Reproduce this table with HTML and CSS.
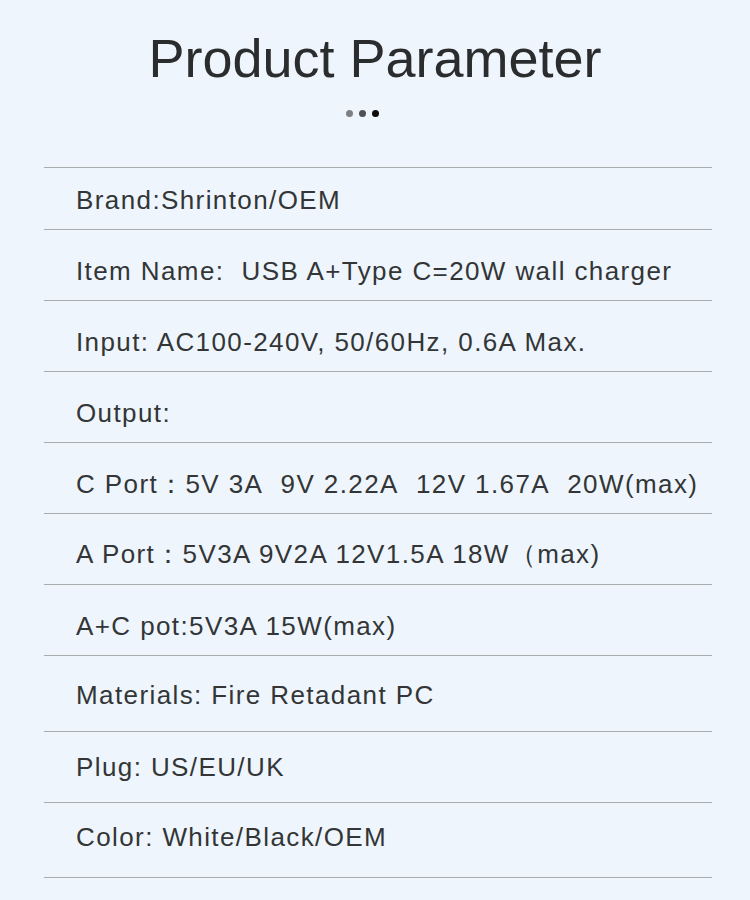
FILE: index.html
```html
<!DOCTYPE html>
<html lang="en">
<head>
<meta charset="utf-8">
<title>Product Parameter</title>
<link rel="stylesheet" href="styles.css">
</head>
<body>
<main class="page">
  <h1 class="title">Product Parameter</h1>
  <div class="dots">
    <span class="dot dot-light"></span>
    <span class="dot dot-mid"></span>
    <span class="dot dot-dark"></span>
  </div>
  <ul class="params">
    <li class="row row-brand">Brand:Shrinton/OEM</li>
    <li class="row">Item Name:&nbsp; USB A+Type C=20W wall charger</li>
    <li class="row">Input: AC100-240V, 50/60Hz, 0.6A Max.</li>
    <li class="row">Output:</li>
    <li class="row">C Port：5V 3A&nbsp; 9V 2.22A&nbsp; 12V 1.67A&nbsp; 20W(max)</li>
    <li class="row row-aport">A Port：5V3A 9V2A 12V1.5A 18W（max)</li>
    <li class="row">A+C pot:5V3A 15W(max)</li>
    <li class="row row-materials">Materials: Fire Retadant PC</li>
    <li class="row row-plug">Plug: US/EU/UK</li>
    <li class="row row-color">Color: White/Black/OEM</li>
  </ul>
</main>
</body>
</html>
```
FILE: styles.css
```css
html, body {
  margin: 0;
  padding: 0;
  background: #eef5fd;
}

.page {
  width: 750px;
  height: 900px;
  overflow: hidden;
  font-family: "Liberation Sans", Arial, sans-serif;
  color: #333536;
}

.title {
  margin: 28px 0 0;
  font-size: 54px;
  line-height: 60px;
  font-weight: normal;
  text-align: center;
  color: #2b2c2e;
  letter-spacing: 0;
}

.dots {
  display: flex;
  justify-content: center;
  gap: 6px;
  margin-top: 22px;
  padding-right: 26px;
}

.dot {
  width: 7px;
  height: 7px;
  border-radius: 50%;
}

.dot-light { background: #7d7f82; }
.dot-mid { background: #4f5154; }
.dot-dark { background: #0c0c0c; }

.params {
  list-style: none;
  margin: 50px 0 0 44px;
  padding: 0;
  width: 668px;
  border-bottom: 1px solid #a8adb0;
}

.row {
  box-sizing: border-box;
  height: 71px;
  padding: 26px 0 0 32px;
  border-top: 1px solid #a8adb0;
  font-size: 26px;
  line-height: 30px;
  letter-spacing: 1.4px;
  white-space: nowrap;
}

.row-brand {
  height: 62px;
  padding-top: 17px;
}

.row-aport {
  padding-top: 25px;
}

.row-materials {
  height: 76px;
  padding-top: 24px;
}

.row-plug {
  padding-top: 20px;
}

.row-color {
  height: 75px;
  padding-top: 19px;
}
```
